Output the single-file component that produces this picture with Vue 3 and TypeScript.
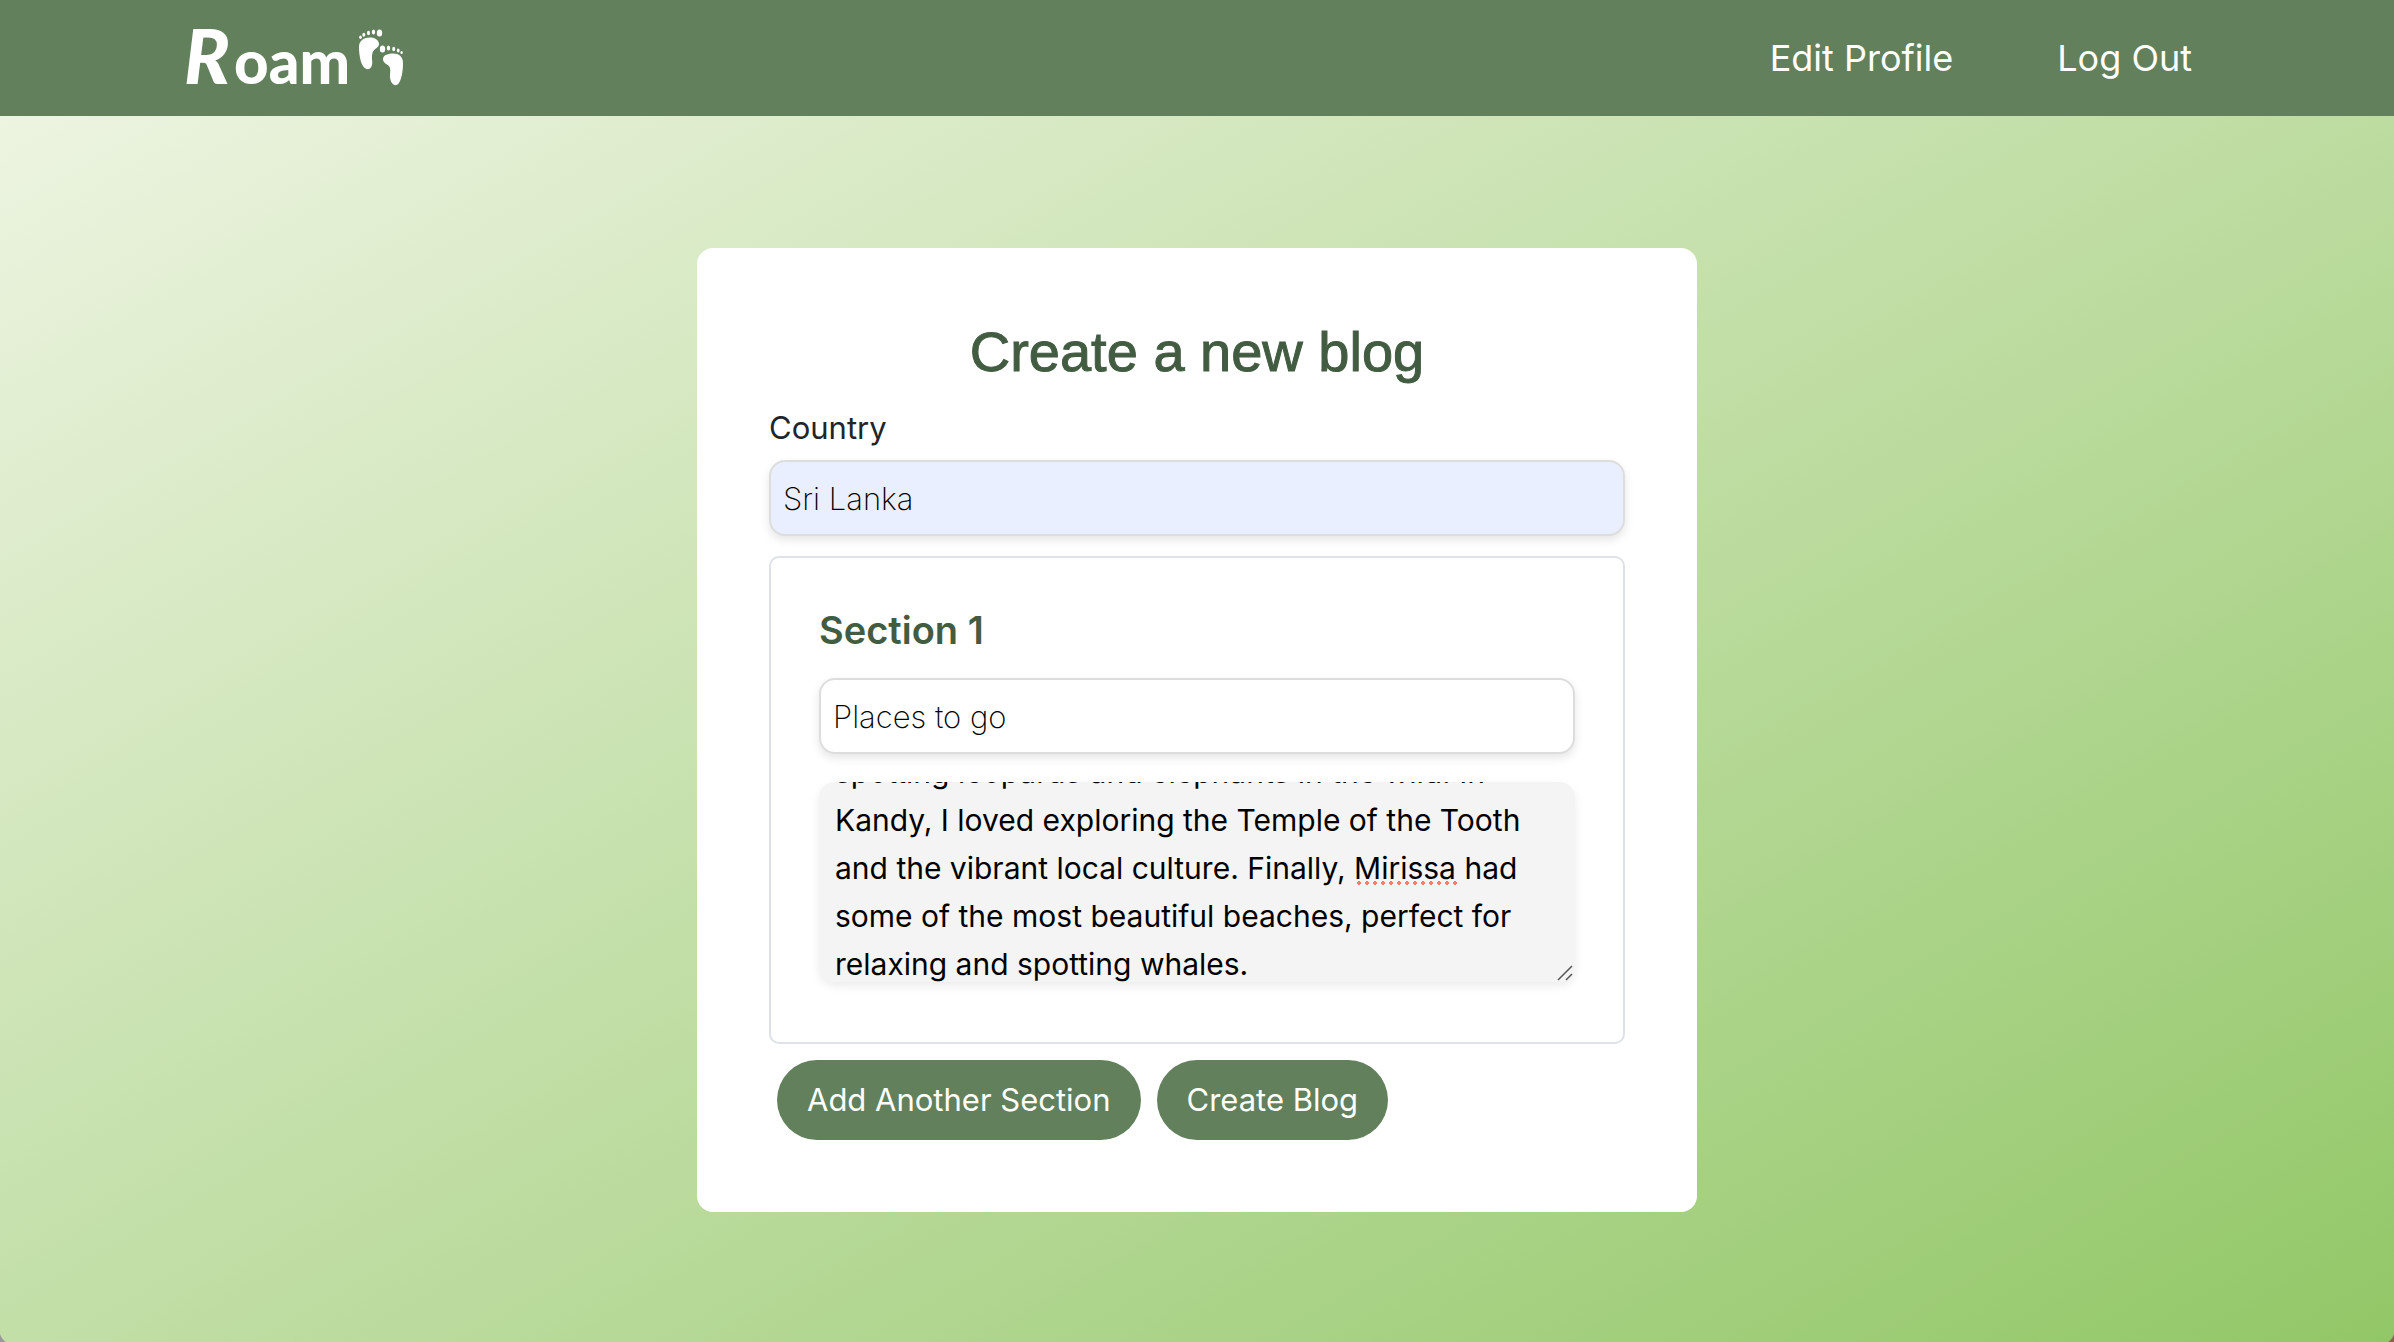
<script setup lang="ts">
import { onMounted, ref } from 'vue'

interface Section {
  title: string
  body: string
}

const country = ref('Sri Lanka')
const sections = ref<Section[]>([
  {
    title: 'Places to go',
    body:
      'Sri Lanka was full of highlights. I went on safari in Yala,\n' +
      'spotting leopards and elephants in the wild. In Kandy, I loved exploring the Temple of the Tooth and the vibrant local culture. Finally, Mirissa had some of the most beautiful beaches, perfect for relaxing and spotting whales.',
  },
])

const bodies = ref<HTMLTextAreaElement[]>([])

onMounted(() => {
  for (const el of bodies.value) {
    el.scrollTop = el.scrollHeight - el.clientHeight - 22
  }
})

function addSection() {
  sections.value.push({ title: '', body: '' })
}
</script>

<template>
  <div class="page">
    <header class="navbar">
      <a class="brand" href="#" aria-label="Roam">
        <span class="wordmark"><span class="initial">R</span>oam</span>
        <svg class="feet" viewBox="0 0 46 58" width="46" height="58" aria-hidden="true">
          <g fill="#fff">
            <path d="M1 18C1 11 7 8 13 8.500C18 9 21 12 21 15C21 19 16 19 14.500 24C13 29 15 32 14 36C13 40 10 41 7.500 39.500C3 37 1 27 1 18Z" />
            <ellipse cx="21.500" cy="4" rx="2.700" ry="3.500" />
            <ellipse cx="15.500" cy="3" rx="1.700" ry="2.500" />
            <ellipse cx="10.500" cy="4" rx="1.500" ry="2.200" />
            <ellipse cx="5.800" cy="5.800" rx="1.500" ry="2" />
            <ellipse cx="2.500" cy="8.200" rx="1.300" ry="1.800" />
            <path d="M45 34C45 27 40 24 34 24.500C28 25 25 27 25 30C25 35 31 35 32 39C33 43 31 47 32.500 51C34 56 38 58 41 54C44 49 45 41 45 34Z" />
            <ellipse cx="24.500" cy="20" rx="2.700" ry="3.500" />
            <ellipse cx="30.500" cy="19" rx="1.700" ry="2.500" />
            <ellipse cx="35.700" cy="20" rx="1.500" ry="2.200" />
            <ellipse cx="40.200" cy="21.500" rx="1.400" ry="1.900" />
            <ellipse cx="43.600" cy="23.500" rx="1.200" ry="1.600" />
          </g>
        </svg>
      </a>
      <nav class="links">
        <a href="#">Edit Profile</a>
        <a href="#">Log Out</a>
      </nav>
    </header>

    <main class="content">
      <form class="card" @submit.prevent>
        <h1>Create a new blog</h1>
        <label class="label" for="country">Country</label>
        <input id="country" v-model="country" class="field autofilled" type="text" />

        <fieldset v-for="(section, i) in sections" :key="i" class="section">
          <h2>Section {{ i + 1 }}</h2>
          <input v-model="section.title" class="field" type="text" :aria-label="`Section ${i + 1} title`" />
          <div class="editor">
            <textarea ref="bodies" v-model="section.body" spellcheck="false" :aria-label="`Section ${i + 1} text`"></textarea>
            <span v-if="i === 0" class="misspelling"></span>
            <svg class="grip" viewBox="0 0 16 16" width="16" height="16" aria-hidden="true">
              <path d="M1 15L15 1M9 15L15 9" stroke="#555" stroke-width="1.500" fill="none" />
            </svg>
          </div>
        </fieldset>

        <div class="actions">
          <button type="button" @click="addSection">Add Another Section</button>
          <button type="submit">Create Blog</button>
        </div>
      </form>
    </main>
  </div>
</template>

<style>
body {
  margin: 0;
}
</style>

<style scoped>
* {
  box-sizing: border-box;
}

.page {
  display: flex;
  flex-direction: column;
  min-height: 100vh;
  font-family: Inter, "Liberation Sans", sans-serif;
  color: #212529;
  background:
    radial-gradient(circle at top right, transparent 14px, #999 15px) bottom left / 14px 14px no-repeat,
    radial-gradient(circle at top left, transparent 14px, #85664a 15px) bottom right / 14px 14px no-repeat,
    linear-gradient(150deg, #f1f6e6, #92c767);
}

.navbar {
  display: flex;
  align-items: center;
  justify-content: space-between;
  height: 116px;
  padding: 0 202px 0 184px;
  background: #62805c;
}

.brand {
  display: flex;
  align-items: center;
  gap: 8px;
  color: #fff;
  text-decoration: none;
}

.wordmark {
  font: 900 60px/80px Lato, sans-serif;
}

.initial {
  margin-right: 4px;
  font-size: 76px;
  font-style: italic;
}

.links {
  display: flex;
  gap: 104px;
}

.links a {
  font-size: 36px;
  line-height: 48px;
  color: #fff;
  text-decoration: none;
}

.content {
  display: flex;
  justify-content: center;
  padding: 132px 24px;
}

.card {
  width: 100%;
  max-width: 1000px;
  padding: 72px;
  background: #fff;
  border-radius: 16px;
}

h1 {
  margin: 0 0 20px;
  font: 400 56px/64px "Liberation Sans", Arial, sans-serif;
  text-align: center;
  color: #425c42;
  -webkit-text-stroke: 1px #425c42;
}

.label {
  display: block;
  margin-bottom: 8px;
  font-size: 31px;
  line-height: 48px;
}

.field {
  display: block;
  width: 100%;
  height: 76px;
  padding: 0 12px;
  border: 2px solid #ddd;
  border-radius: 16px;
  background: #fff;
  box-shadow: 0 4px 10px rgba(0, 0, 0, 0.1);
  font: 200 31px/48px Inter, sans-serif;
  color: #000;
}

.autofilled {
  background: #e9effe;
}

.section {
  min-width: 0;
  margin: 20px 0 16px;
  padding: 48px 48px 60px;
  border: 2px solid #dee2e6;
  border-radius: 10px;
}

h2 {
  margin: 0 0 24px;
  font-size: 38px;
  font-weight: 600;
  line-height: 48px;
  color: #425c42;
}

.editor {
  position: relative;
  margin-top: 28px;
}

textarea {
  display: block;
  width: 100%;
  height: 200px;
  padding: 16px;
  border: 0;
  border-radius: 16px;
  background: #f4f4f4;
  box-shadow: 0 4px 10px rgba(0, 0, 0, 0.08);
  font: 400 30px/48px Inter, sans-serif;
  color: #000;
  resize: none;
  scrollbar-width: none;
}

.misspelling {
  position: absolute;
  top: 99px;
  left: 536px;
  width: 104px;
  height: 4px;
  background: radial-gradient(circle, #f47c70 2px, transparent 2px) 0 0 / 8px 4px repeat-x;
}

.grip {
  position: absolute;
  right: 2px;
  bottom: 1px;
  pointer-events: none;
}

.actions {
  display: flex;
  gap: 16px;
  padding-left: 8px;
}

button {
  height: 80px;
  padding: 0 30px;
  border: 0;
  border-radius: 40px;
  background: #62805c;
  color: #fff;
  font: 400 31px/48px Inter, sans-serif;
}
</style>
